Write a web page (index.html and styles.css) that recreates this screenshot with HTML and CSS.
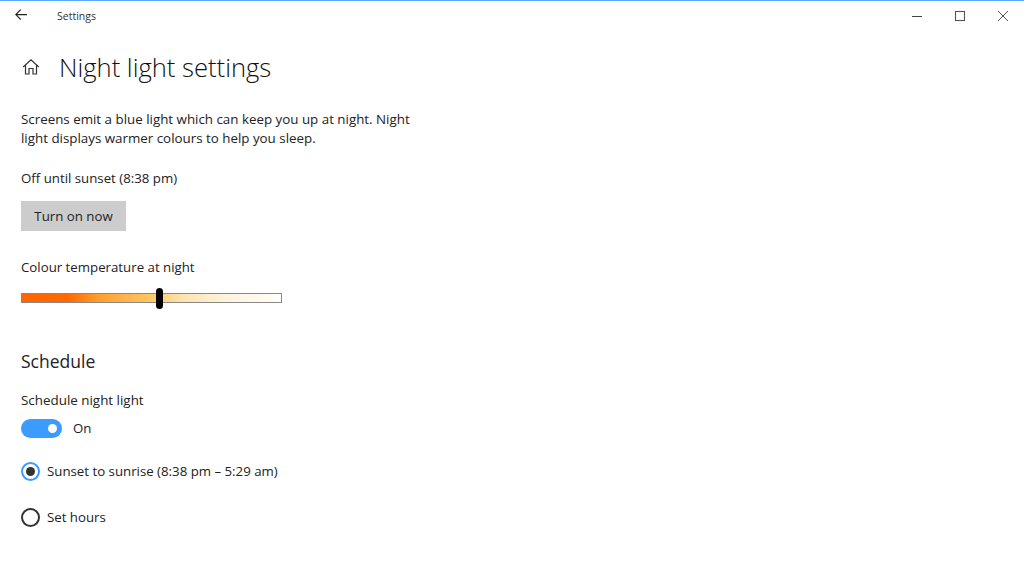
FILE: index.html
```html
<!DOCTYPE html>
<html lang="en">
<head>
<meta charset="utf-8">
<title>Settings</title>
<link rel="stylesheet" href="styles.css">
</head>
<body>
<header class="titlebar">
  <div class="titlebar-left">
    <svg class="back" width="12" height="12" viewBox="0 0 12 12"><path d="M5.7 .7 .8 5.6 5.7 10.5M.8 5.6H12" fill="none" stroke="#222" stroke-width="1.1"/></svg>
    <span class="app-name">Settings</span>
  </div>
  <div class="controls">
    <svg class="ctl" width="12" height="12" viewBox="0 0 12 12"><path d="M1 6.5H11" stroke="#444" stroke-width="1"/></svg>
    <svg class="ctl" width="12" height="12" viewBox="0 0 12 12"><rect x="1.5" y="1.5" width="9" height="9" fill="none" stroke="#555" stroke-width="1.1"/></svg>
    <svg class="ctl" width="12" height="12" viewBox="0 0 12 12"><path d="M1 1 11 11M11 1 1 11" stroke="#555" stroke-width="1"/></svg>
  </div>
</header>
<main class="content">
  <div class="page-head">
    <svg class="home" width="18" height="18" viewBox="0 0 18 18"><path d="M1.2 9 9 1.8 16.8 9M3.5 7.2V16H7V10.5H11V16H14.5V7.2" fill="none" stroke="#333" stroke-width="1.2"/></svg>
    <h1>Night light settings</h1>
  </div>
  <p class="intro">Screens emit a blue light which can keep you up at night. Night light displays warmer colours to help you sleep.</p>
  <p class="status">Off until sunset (8:38 pm)</p>
  <button class="btn" type="button">Turn on now</button>
  <p class="slider-label">Colour temperature at night</p>
  <div class="slider"><span class="thumb"></span></div>
  <h2>Schedule</h2>
  <p class="toggle-label">Schedule night light</p>
  <div class="toggle-row"><span class="toggle"><span class="knob"></span></span><span>On</span></div>
  <div class="radio-row first"><span class="radio on"></span><span>Sunset to sunrise (8:38 pm – 5:29 am)</span></div>
  <div class="radio-row second"><span class="radio"></span><span>Set hours</span></div>
</main>
</body>
</html>
```
FILE: styles.css
```css
* { box-sizing: border-box; }
html, body { margin: 0; height: 100%; }
body {
  background: #fff;
  color: #222;
  font-family: "Open Sans", "Noto Sans", sans-serif;
  font-size: 13.25px;
  line-height: 18px;
  overflow: hidden;
}
p { margin: 0; }
.titlebar {
  height: 31px;
  border-top: 1px solid #5aaaff;
  display: flex;
  justify-content: space-between;
  align-items: center;
}
.titlebar-left { display: flex; align-items: center; padding-left: 15px; }
.back { margin-top: -3px; }
.app-name { margin-left: 30px; font-size: 10.5px; color: #333; margin-top: -1px; }
.controls { display: flex; align-items: center; gap: 31px; padding-right: 15px; margin-top: -1px; }
.content { padding: 0 0 0 21px; }
.page-head { display: flex; align-items: center; margin-top: 17px; height: 38px; }
.home { margin-left: 1px; }
h1 { margin: 2px 0 0 19px; font-size: 25.6px; font-weight: 300; line-height: 38px; color: #111; }
.intro { margin-top: 24px; width: 410px; font-size: 13.35px; line-height: 19px; }
.status { margin-top: 20px; line-height: 20px; }
.btn {
  display: block;
  margin-top: 13px;
  width: 105px;
  height: 30px;
  border: 0;
  padding: 0;
  background: #ccc;
  color: #222;
  font: inherit;
}
.slider-label { margin-top: 26px; line-height: 20px; }
.slider {
  position: relative;
  margin-top: 16px;
  width: 261px;
  height: 10px;
  border: 1px solid #888;
  background: linear-gradient(90deg, #ff6500 0, #ff6a00 18%, #ffa030 30%, #ffc766 50%, #ffe3b0 62%, #fff3dc 78%, #fffefa 100%);
}
.thumb {
  position: absolute;
  left: 134px;
  top: -6px;
  width: 7px;
  height: 21px;
  border-radius: 4px;
  background: #000;
}
h2 { margin: 46px 0 0; font-size: 17.5px; font-weight: 400; line-height: 24px; color: #222; }
.toggle-label { margin-top: 17px; line-height: 20px; font-size: 13.4px; }
.toggle-row { display: flex; align-items: center; gap: 11px; margin-top: 8px; height: 20px; }
.toggle {
  display: flex;
  align-items: center;
  justify-content: flex-end;
  width: 41px;
  height: 19px;
  padding-right: 5px;
  border-radius: 10px;
  background: #3c9bff;
}
.knob { width: 9px; height: 9px; border-radius: 50%; background: #fff; }
.radio-row { display: flex; align-items: center; gap: 7px; height: 20px; }
.radio-row.first { margin-top: 23px; }
.radio-row.second { margin-top: 26px; }
.radio {
  display: flex;
  align-items: center;
  justify-content: center;
  width: 19px;
  height: 19px;
  border: 2px solid #333;
  border-radius: 50%;
}
.radio.on { border-color: #3c9bff; }
.radio.on::after { content: ""; width: 9px; height: 9px; border-radius: 50%; background: #333; }
```
